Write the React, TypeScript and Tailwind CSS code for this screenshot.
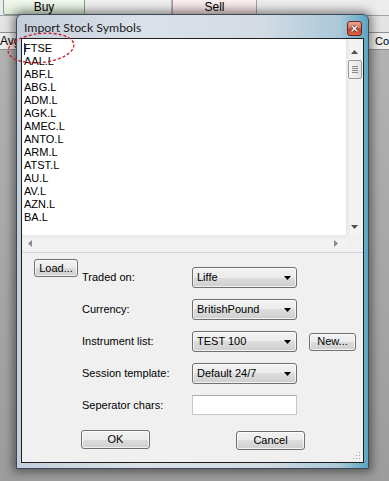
import React from "react";

const btn =
  "flex items-center justify-center rounded-[3px] border border-[#707070] bg-[linear-gradient(#f2f2f2_0%,#ebebeb_50%,#dddddd_50%,#cfcfcf_100%)] text-[11px] leading-none text-black shadow-[inset_0_0_0_1px_rgba(255,255,255,0.7)]";

const combo =
  "flex h-[21px] w-[105px] items-center justify-between rounded-[3px] border border-[#707070] bg-[linear-gradient(#f2f2f2_0%,#ebebeb_50%,#dddddd_50%,#cfcfcf_100%)] pl-[4px] pr-[5px] text-[11px] text-black shadow-[inset_0_0_0_1px_rgba(255,255,255,0.7)]";

function DownTri({ color = "#000" }: { color?: string }) {
  return (
    <svg width="7" height="4" viewBox="0 0 7 4">
      <polygon points="0,0 7,0 3.5,4" fill={color} />
    </svg>
  );
}

function Combo({ text }: { text: string }) {
  return (
    <div className={combo}>
      <span>{text}</span>
      <DownTri />
    </div>
  );
}

export default function App() {
  const items = [
    "FTSE",
    "AAL.L",
    "ABF.L",
    "ABG.L",
    "ADM.L",
    "AGK.L",
    "AMEC.L",
    "ANTO.L",
    "ARM.L",
    "ATST.L",
    "AU.L",
    "AV.L",
    "AZN.L",
    "BA.L",
  ];
  const rows: { label: string; value?: string; input?: boolean; extra?: boolean }[] = [
    { label: "Traded on:", value: "Liffe" },
    { label: "Currency:", value: "BritishPound" },
    { label: "Instrument list:", value: "TEST 100", extra: true },
    { label: "Session template:", value: "Default 24/7" },
    { label: "Seperator chars:", input: true },
  ];

  return (
    <div className="relative flex h-[481px] w-[389px] flex-col overflow-hidden bg-[#a8a8a8] font-['Liberation_Sans',Arial,sans-serif] text-black">
      {/* background application */}
      <div className="flex h-[16px] shrink-0 border-b border-[#a3a3a3] bg-[#ececec] text-[12px]">
        <div className="ml-[3px] flex w-[82px] items-center justify-center rounded-b-[2px] border border-t-0 border-[#8f9a8f] bg-[linear-gradient(#f1f8ee,#dcebd6)]">
          Buy
        </div>
        <div className="w-[87px] border-r border-[#b8b8b8] bg-[#efefef]" />
        <div className="flex w-[85px] items-center justify-center rounded-b-[2px] border border-t-0 border-[#a89a9a] bg-[linear-gradient(#f9eeee,#f0dcdc)]">
          Sell
        </div>
        <div className="flex-1" />
      </div>
      <div className="h-[16px] shrink-0 bg-[#e4e4e4]" />
      <div className="flex h-[18px] shrink-0 items-center justify-between border-y border-[#8e8e8e] bg-[#eeeeee] text-[12px]">
        <span>Avg</span>
        <span className="text-[11px] leading-none">Co</span>
      </div>
      <div className="flex-1 bg-[linear-gradient(to_bottom,#b2b2b2,#9c9c9c)]" />

      {/* dialog */}
      <div className="absolute left-[16px] top-[14px] flex h-[455px] w-[353px] flex-col rounded-t-[6px] border border-[#3d4956] bg-[linear-gradient(to_right,#c3cedb_0%,#dae1e9_35%,#d3dbe4_70%,#a9c8d8_92%,#5aa6c4_100%)] shadow-[0_0_10px_3px_rgba(0,0,0,0.45)]">
        <div className="flex h-[23px] shrink-0 items-center justify-between pl-[7px] pr-[6px] pt-[4px]">
          <span className="font-['Lato',sans-serif] text-[12.3px] leading-none text-[#1a1a1a]">
            Import Stock Symbols
          </span>
          <div className="flex h-[15px] w-[15px] items-center justify-center rounded-[3px] border border-[#6b2417] bg-[linear-gradient(#eaa896_0%,#d8735c_45%,#c2432b_55%,#d9664a_100%)]">
            <svg width="7" height="7" viewBox="0 0 7 7">
              <path d="M1 1 L6 6 M6 1 L1 6" stroke="#5a1a10" strokeWidth="2.6" strokeLinecap="square" />
              <path d="M1 1 L6 6 M6 1 L1 6" stroke="#ffffff" strokeWidth="1.5" strokeLinecap="square" />
            </svg>
          </div>
        </div>

        <div className="mx-[4px] mb-[5px] flex flex-1 flex-col border border-[#1e1e1e] bg-[#f0f0f0]">
          {/* multiline text box */}
          <div className="flex h-[214px] shrink-0 flex-col border-b border-[#cfd6dd]">
            <div className="flex h-[196px]">
              <div className="relative flex-1 overflow-hidden bg-white pl-[2px] pt-[3px] text-[11px] leading-[13px]">
                <div className="absolute left-[2px] top-[4px] h-[12px] w-[1px] bg-[#1b2f6e]" />
                {items.map((t) => (
                  <div key={t}>{t}</div>
                ))}
              </div>
              <div className="flex w-[17px] flex-col items-center bg-[linear-gradient(to_right,#e6e6e6,#f4f4f4_30%,#f2f2f2)] pb-[6px] pt-[11px]">
                <svg width="7" height="4" viewBox="0 0 7 4">
                  <polygon points="0,4 7,4 3.5,0" fill="#4f4f4f" />
                </svg>
                <div className="mt-[6px] flex h-[19px] w-[14px] flex-col items-center justify-center gap-[1px] rounded-[2px] border border-[#999999] bg-[linear-gradient(to_right,#f6f6f6,#e4e4e4)]">
                  <div className="h-[1px] w-[6px] bg-[#8a8a8a]" />
                  <div className="h-[1px] w-[6px] bg-[#8a8a8a]" />
                  <div className="h-[1px] w-[6px] bg-[#8a8a8a]" />
                  <div className="h-[1px] w-[6px] bg-[#8a8a8a]" />
                </div>
                <div className="flex-1" />
                <DownTri color="#4f4f4f" />
              </div>
            </div>
            <div className="flex h-[17px]">
              <div className="flex flex-1 items-center justify-between bg-[linear-gradient(#e8e8e8,#f3f3f3_30%,#f1f1f1)] pl-[6px] pr-[8px]">
                <svg width="4" height="7" viewBox="0 0 4 7">
                  <polygon points="4,0 4,7 0,3.5" fill="#8a8a8a" />
                </svg>
                <svg width="4" height="7" viewBox="0 0 4 7">
                  <polygon points="0,0 0,7 4,3.5" fill="#8a8a8a" />
                </svg>
              </div>
              <div className="w-[17px] bg-[#f0f0f0]" />
            </div>
          </div>

          {/* form */}
          <div className="relative flex flex-1 flex-col">
            <div className="flex pl-[12px] pt-[6px]">
              <div className={btn + " h-[18px] w-[44px] self-start"}>Load...</div>
              <div className="ml-[4px] mt-[8px] grid grid-cols-[110px_105px_auto] items-center gap-y-[11px] text-[11px]">
                {rows.map((r) => (
                  <React.Fragment key={r.label}>
                    <span>{r.label}</span>
                    {r.input ? (
                      <div className="h-[20px] w-[105px] border border-[#c4c8cc] border-t-[#a9aeb3] bg-white" />
                    ) : (
                      <Combo text={r.value!} />
                    )}
                    {r.extra ? (
                      <div className={btn + " ml-[12px] h-[18px] w-[47px]"}>New...</div>
                    ) : (
                      <span />
                    )}
                  </React.Fragment>
                ))}
              </div>
            </div>
            <div className="mt-[15px] flex items-start pl-[59px]">
              <div className={btn + " h-[19px] w-[69px] border-[#3c7fb1]"}>OK</div>
              <div className={btn + " ml-[86px] mt-[1px] h-[19px] w-[69px]"}>Cancel</div>
            </div>
            <svg className="absolute bottom-[2px] right-[2px]" width="8" height="8" viewBox="0 0 8 8">
              <g fill="#a0a0a0">
                <rect x="6" y="0" width="1" height="1" />
                <rect x="3" y="3" width="1" height="1" />
                <rect x="6" y="3" width="1" height="1" />
                <rect x="0" y="6" width="1" height="1" />
                <rect x="3" y="6" width="1" height="1" />
                <rect x="6" y="6" width="1" height="1" />
              </g>
              <g fill="#ffffff">
                <rect x="7" y="1" width="1" height="1" />
                <rect x="4" y="4" width="1" height="1" />
                <rect x="7" y="4" width="1" height="1" />
                <rect x="1" y="7" width="1" height="1" />
                <rect x="4" y="7" width="1" height="1" />
                <rect x="7" y="7" width="1" height="1" />
              </g>
            </svg>
          </div>
        </div>
      </div>

      {/* red annotation ellipse */}
      <svg className="pointer-events-none absolute left-0 top-0" width="389" height="481" viewBox="0 0 389 481">
        <ellipse
          cx="41"
          cy="48"
          rx="33"
          ry="14.5"
          transform="rotate(-6 41 48)"
          fill="none"
          stroke="#c81e2c"
          strokeWidth="1.3"
          strokeDasharray="3 2"
        />
      </svg>
    </div>
  );
}
